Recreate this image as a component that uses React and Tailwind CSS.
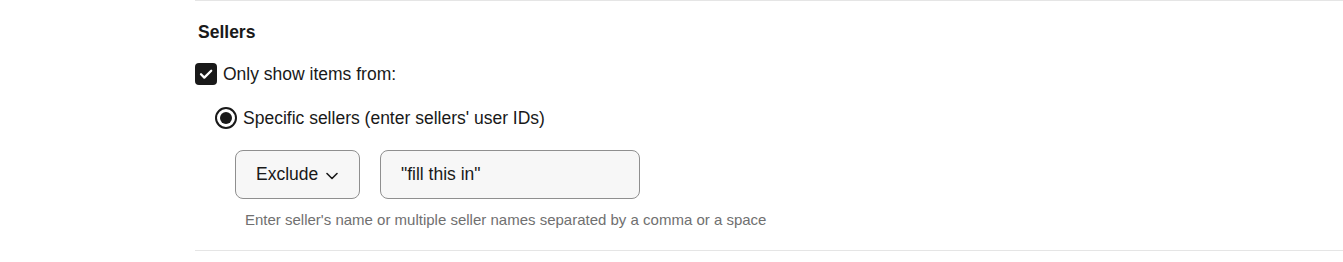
export default function App() {
  return (
    <div className="w-[1343px] h-[262px] bg-white font-['Liberation_Sans',Arial,sans-serif] text-[#191919]">
      <div className="ml-[195px] border-t border-b border-[#e5e5e5] pl-[3px] pt-[21px] pb-[21px]">
        <h3 className="text-[17.5px] font-bold leading-[20px]">Sellers</h3>

        <label className="mt-[21px] -ml-[3px] flex items-center gap-[6px] text-[17.5px] leading-[22px]">
          <span className="w-[22px] h-[22px] rounded-[4px] bg-[#191919] flex items-center justify-center">
            <svg width="16" height="16" viewBox="0 0 16 16" fill="none">
              <path d="M3 8.3l3.3 3.3L13.2 4.7" stroke="white" strokeWidth="2.3" strokeLinecap="round" strokeLinejoin="round" />
            </svg>
          </span>
          Only show items from:
        </label>

        <label className="mt-[22px] ml-[17px] flex items-center gap-[6px] text-[17.5px] leading-[22px]">
          <span className="w-[22px] h-[22px] rounded-full border-2 border-[#191919] flex items-center justify-center">
            <span className="w-[12px] h-[12px] rounded-full bg-[#191919]" />
          </span>
          Specific sellers (enter sellers' user IDs)
        </label>

        <div className="mt-[21px] ml-[37px] flex items-center gap-[20px]">
          <button className="w-[125px] h-[49px] rounded-[8px] border border-[#8f8f8f] bg-[#f7f7f7] flex items-center pl-[20px] gap-[8px] text-[17.5px]">
            Exclude
            <svg width="12" height="8" viewBox="0 0 12 8" fill="none" className="mt-[2px]">
              <path d="M1 1.5l5 5 5-5" stroke="#191919" strokeWidth="1.6" strokeLinecap="round" strokeLinejoin="round" />
            </svg>
          </button>
          <div className="w-[260px] h-[49px] rounded-[8px] border border-[#8f8f8f] bg-[#f7f7f7] flex items-center pl-[20px] text-[17.5px]">
            "fill this in"
          </div>
        </div>

        <p className="mt-[12px] ml-[47px] text-[15px] leading-[18px] text-[#707070]">
          Enter seller's name or multiple seller names separated by a comma or a space
        </p>
      </div>
    </div>
  );
}
